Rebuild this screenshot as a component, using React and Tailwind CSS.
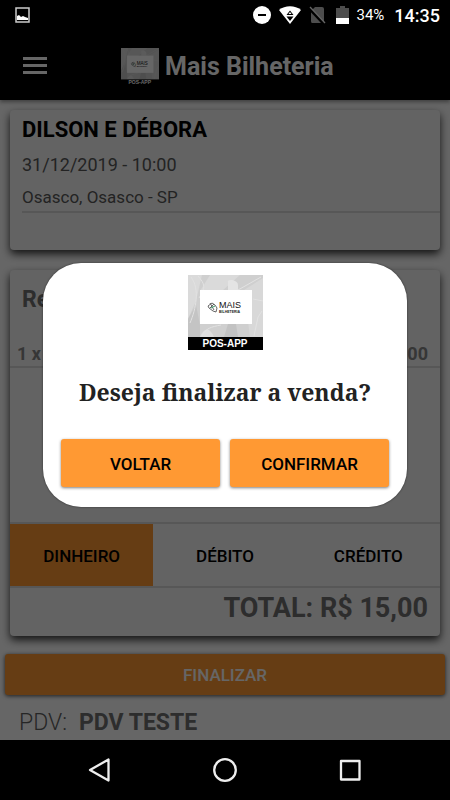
import React from 'react';

const PosLogo = ({ className }) => (
    <svg viewBox="0 0 75 75" className={className} role="img" aria-label="Mais Bilheteria POS-APP">
        <rect width="75" height="75" fill="#cfcfcf" />
        <path d="M0 0H14L8 26L0 44Z" fill="#dadada" />
        <path d="M22 0H52L34 16H12Z" fill="#dadada" />
        <path d="M56 15L75 3V62H62Z" fill="#d8d8d8" />
        <path d="M0 44L8 30L12 50V62H0Z" fill="#c4c4c4" />
        <path d="M40 15V8C38 3 50 5 50 10V15Z" fill="#e4e4e4" />
        <path d="M12 62C16 52 22 52 26 62Z" fill="#dedede" />
        <path d="M36 62L40 49H48L50 62Z" fill="#c2c2c2" />
        <g fill="none" stroke="#e2e2e2" strokeWidth="1">
            <path d="M3 2C12 14 8 34 2 48M10 1C17 9 18 13 11 23M50 15L73 2M65 24L75 26M66 61L70 42L74 36M14 61C18 53 23 52 33 50" />
        </g>
        <rect x="12" y="15" width="52" height="34" fill="#fff" />
        <g fill="none" stroke="#555" strokeWidth="0.9">
            <path d="M20 31L24 28L27 30L29 33L28 37L25 36L21 33Z" />
            <path d="M22 28L26 35M26 29L22 33" />
        </g>
        <path d="M23 33L27 31" stroke="#3c9c6c" />
        <text x="31" y="33" fontFamily="Liberation Sans, Arial, sans-serif" fontSize="9" fill="#111">MAIS</text>
        <text x="31" y="38" fontFamily="Liberation Sans, Arial, sans-serif" fontSize="3.5" fontWeight="bold" fill="#222">BILHETERIA</text>
        <rect y="62" width="75" height="13" fill="#000" />
        <text x="37" y="72" textAnchor="middle" fontFamily="Liberation Sans, Arial, sans-serif" fontSize="10" fontWeight="bold" fill="#fff">POS-APP</text>
    </svg>
);

const StatusBar = () => (
    <div className="flex h-[30px] items-center bg-black pl-[15px] pr-[10px] text-white">
        <svg viewBox="0 0 15 16" className="h-4 w-[15px]" aria-hidden="true">
            <rect x="1" y="1" width="13" height="14" fill="none" stroke="#ccc" strokeWidth="1.5" />
            <path d="M2 13V9L4 8L6 10L8 9L10 10L13 11V13Z" fill="#fff" />
        </svg>
        <div className="ml-auto flex items-center">
            <svg viewBox="0 0 18 18" className="mr-2 size-[18px]" aria-hidden="true">
                <circle cx="9" cy="9" r="9" fill="#fff" />
                <rect x="5" y="8" width="8" height="2" fill="#000" />
            </svg>
            <svg viewBox="0 0 22 18" className="mr-2 h-[18px] w-[22px]" aria-hidden="true">
                <path d="M0 4C6-1 16-1 22 4L11 18Z" fill="#fff" />
                <path d="M7.5 9L11 4.5L14.5 9ZM7.5 10.5H14.5L11 15Z" fill="#000" />
                <path d="M9.5 8L11 6L12.5 8Z" fill="#fff" />
            </svg>
            <svg viewBox="0 0 17 18" className="mr-[10px] h-[18px] w-[17px]" aria-hidden="true">
                <path d="M6 1H13Q15 1 15 3V17H3Q2 17 2 15V5Z" fill="#4d4d4d" />
                <path d="M0 2L15 18" stroke="#000" strokeWidth="3" />
                <path d="M1 1L16 17" stroke="#666" strokeWidth="1.3" />
            </svg>
            <svg viewBox="0 0 13 18" className="mr-[7px] h-[18px] w-[13px]" aria-hidden="true">
                <path d="M4 0H9V2H13V12H0V2H4Z" fill="#4d4d4d" />
                <path d="M0 12H13V18H0Z" fill="#fff" />
            </svg>
            <span className="mr-[10px] text-[15px]">34%</span>
            <span className="text-[18px] font-medium">14:35</span>
        </div>
    </div>
);

const Header = () => (
    <header className="flex h-[70px] items-center bg-black px-[23px] shadow-[0_2px_4px_rgba(0,0,0,0.4)]">
        <button type="button" aria-label="Menu" className="flex w-6 flex-col gap-1">
            <span className="h-[3px] bg-white" />
            <span className="h-[3px] bg-white" />
            <span className="h-[3px] bg-white" />
        </button>
        <div className="ml-[74px] flex items-center gap-[6px] pt-1">
            <PosLogo className="size-[38px]" />
            <h1 className="text-[25px] font-bold text-white">Mais Bilheteria</h1>
        </div>
    </header>
);

const EventCard = () => (
    <section className="mx-[10px] mt-[10px] h-[140px] rounded-sm bg-[#f7f7f7] pl-3 shadow-[0_4px_8px_rgba(0,0,0,0.8)]">
        <div className="border-b-2 border-[#dadada] pt-1">
            <h2 className="text-[22px] leading-8 font-bold text-black">DILSON E DÉBORA</h2>
            <p className="pt-px text-[18px] leading-9 text-[#585858]">31/12/2019 - 10:00</p>
            <p className="text-[17px] leading-7 text-[#585858]">Osasco, Osasco - SP</p>
        </div>
    </section>
);

const payments = [
    { id: 'dinheiro', label: 'DINHEIRO', active: true },
    { id: 'debito', label: 'DÉBITO', active: false },
    { id: 'credito', label: 'CRÉDITO', active: false },
];

const SummaryCard = () => (
    <section className="mx-[10px] mt-5 flex flex-1 flex-col rounded-sm bg-[#f7f7f7] shadow-[0_4px_8px_rgba(0,0,0,0.8)]">
        <h2 className="px-3 pt-3 text-[23px] leading-9 font-bold text-[#707070]">Resumo</h2>
        <div className="mt-6 flex justify-between border-b-2 border-[#dadada] pr-3 pl-[7px] text-[18px] leading-6 font-bold text-[#888]">
            <span>1 x</span>
            <span>15,00</span>
        </div>
        <div className="mt-auto grid h-[66px] grid-cols-3 border-y-2 border-[#dadada]">
            {payments.map((item) => (
                <button
                    key={item.id}
                    type="button"
                    className={`pt-1 text-[17px] font-medium text-black ${item.active ? 'bg-[#ff9933]' : ''}`}
                >
                    {item.label}
                </button>
            ))}
        </div>
        <p className="h-12 pr-3 text-right text-[27px] leading-10 font-bold text-[#707070]">TOTAL: R$ 15,00</p>
    </section>
);

const ConfirmDialog = () => (
    <div className="absolute inset-0 flex items-center justify-center bg-black/60 px-[43px]">
        <div
            role="dialog"
            aria-labelledby="confirm-title"
            className="flex w-full max-w-[480px] flex-col items-center rounded-[38px] bg-white px-[18px] pt-3 pb-5 shadow-[0_0_2px_rgba(0,0,0,0.6)]"
        >
            <PosLogo className="size-[75px]" />
            <h2 id="confirm-title" className="mt-6 font-['Noto_Serif','DejaVu_Serif_Condensed','DejaVu_Serif',serif] text-[23px] leading-9 font-bold whitespace-nowrap text-[#222]">
                Deseja finalizar a venda?
            </h2>
            <div className="mt-[29px] grid w-full grid-cols-2 gap-[10px]">
                <button type="button" className="h-12 rounded-[3px] bg-[#ff9933] pt-1 text-[17px] font-medium text-black shadow-[0_1px_3px_rgba(0,0,0,0.5)]">VOLTAR</button>
                <button type="button" className="h-12 rounded-[3px] bg-[#ff9933] pt-1 text-[17px] font-medium text-black shadow-[0_1px_3px_rgba(0,0,0,0.5)]">CONFIRMAR</button>
            </div>
        </div>
    </div>
);

const NavBar = () => (
    <nav className="flex h-[60px] items-center justify-center gap-[101px] bg-black text-[#eee]">
        <button type="button" aria-label="Voltar à tela anterior">
            <svg viewBox="0 0 24 24" className="size-6" fill="none" stroke="currentColor" strokeWidth="2.3" strokeLinejoin="round">
                <path d="M20.5 1.5V22.5L2 12Z" />
            </svg>
        </button>
        <button type="button" aria-label="Início">
            <svg viewBox="0 0 24 24" className="size-6" fill="none" stroke="currentColor" strokeWidth="2.3">
                <circle cx="12" cy="12" r="10.8" />
            </svg>
        </button>
        <button type="button" aria-label="Recentes">
            <svg viewBox="0 0 24 24" className="size-6" fill="none" stroke="currentColor" strokeWidth="2.3" strokeLinejoin="round">
                <rect x="3" y="3" width="18.5" height="18.5" />
            </svg>
        </button>
    </nav>
);

const App = () => (
    <div className="flex min-h-screen flex-col bg-white font-['Roboto',sans-serif]">
        <StatusBar />
        <main className="relative flex flex-1 flex-col bg-white">
            <Header />
            <EventCard />
            <SummaryCard />
            <button type="button" className="mx-[5px] mt-[18px] h-[41px] rounded-[3px] bg-[#ff9933] pt-[2px] text-[17px] font-medium text-white shadow-[0_1px_4px_rgba(0,0,0,0.7)]">
                FINALIZAR
            </button>
            <p className="flex h-[45px] items-center gap-3 px-[19px] pt-3 text-[23px] font-light text-[#606060]">
                PDV: <strong className="font-bold text-[#707070]">PDV TESTE</strong>
            </p>
            <ConfirmDialog />
        </main>
        <NavBar />
    </div>
);

export default App;
